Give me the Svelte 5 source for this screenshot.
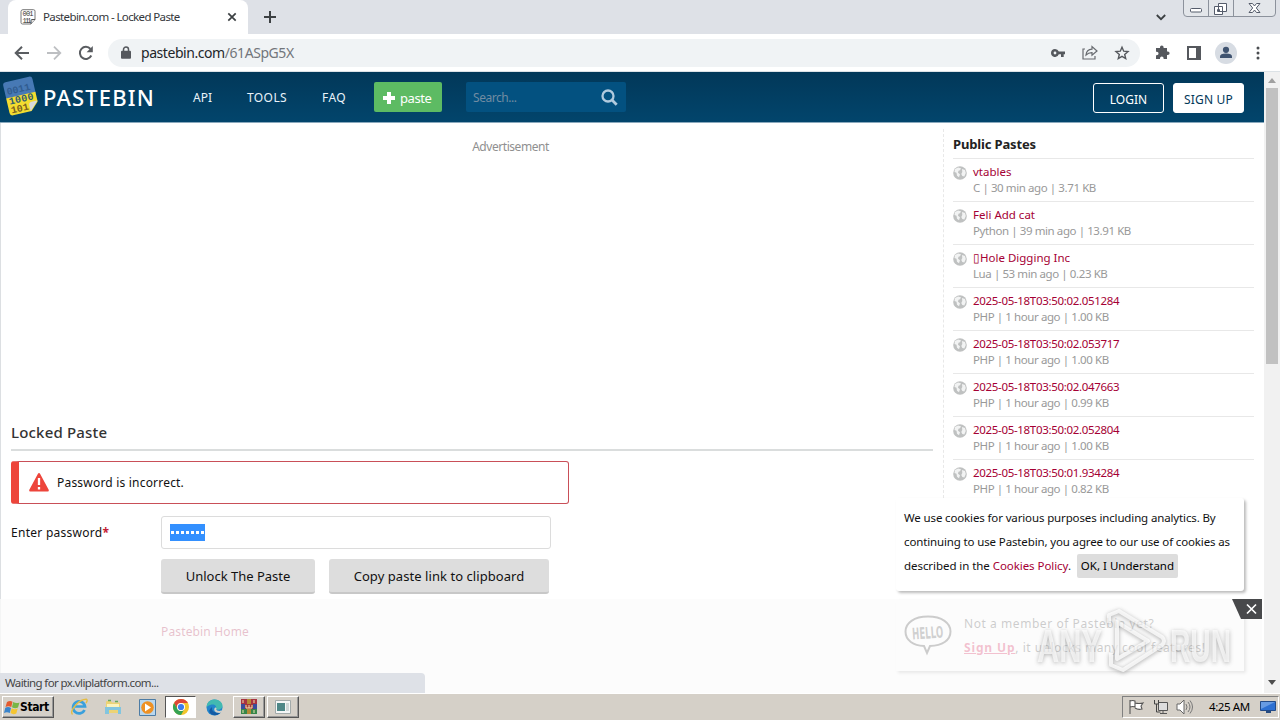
<script lang="ts">
	type Paste = { title: string; meta: string };

	const pastes: Paste[] = [
		{ title: 'vtables', meta: 'C | 30 min ago | 3.71 KB' },
		{ title: 'Feli Add cat', meta: 'Python | 39 min ago | 13.91 KB' },
		{ title: '▯Hole Digging Inc', meta: 'Lua | 53 min ago | 0.23 KB' },
		{ title: '2025-05-18T03:50:02.051284', meta: 'PHP | 1 hour ago | 1.00 KB' },
		{ title: '2025-05-18T03:50:02.053717', meta: 'PHP | 1 hour ago | 1.00 KB' },
		{ title: '2025-05-18T03:50:02.047663', meta: 'PHP | 1 hour ago | 0.99 KB' },
		{ title: '2025-05-18T03:50:02.052804', meta: 'PHP | 1 hour ago | 1.00 KB' },
		{ title: '2025-05-18T03:50:01.934284', meta: 'PHP | 1 hour ago | 0.82 KB' }
	];
</script>

<div class="screen">
	<div class="tabs">
		<div class="tab">
			<svg class="favicon" width="16" height="16" viewBox="0 0 16 16">
				<path d="M3 .7h10.500q1.500 0 1.500 1.500v8.300L11 15H2.500Q1 15 1 13.500V2.500Q1 .7 3 .7z" fill="#fff" stroke="#777" />
				<path d="M15 10.500h-3q-1 0-1 1V15" fill="#ddd" stroke="#555" />
				<text x="2.500" y="7.300" textLength="11">001</text>
				<text x="2.500" y="13.500" textLength="9">111</text>
			</svg>
			<span class="tab-title">Pastebin.com - Locked Paste</span>
			<svg class="tab-close" width="10" height="10" viewBox="0 0 10 10"><path d="M1.300 1.300l7.400 7.400M8.700 1.300L1.300 8.700" stroke="#3c4043" stroke-width="1.700" /></svg>
		</div>
		<svg class="new-tab" width="12" height="12" viewBox="0 0 12 12"><path d="M6 0v12M0 6h12" stroke="#3c4043" stroke-width="2" /></svg>
		<svg class="tab-search" width="10" height="7" viewBox="0 0 10 7"><path d="M.8 1L5 5.200 9.200 1" fill="none" stroke="#3c4043" stroke-width="1.800" /></svg>
		<svg class="window-buttons" width="94" height="18" viewBox="0 0 94 18">
			<path d="M.5-1v14q0 3.500 3.500 3.500h85q3.500 0 3.500-3.500V-1M25.500 0v16M50.500 0v16" fill="#e3e6ea" stroke="#8c929c" />
			<rect x="7.500" y="8.500" width="11" height="3.500" rx="1" fill="#fff" stroke="#555c6b" />
			<path d="M35.500 3.500h8v8h-8zM31.500 6.500h8v8h-8z" fill="#fff" stroke="#555c6b" />
			<path d="M34.500 9.500h2v2h-2z" fill="none" stroke="#555c6b" />
			<path d="M66 3.500h3.500l2 2.500 2-2.500H77L73.300 8l3.700 4.500h-3.500l-2-2.500-2 2.500H66L69.700 8z" fill="#fff" stroke="#555c6b" />
		</svg>
	</div>

	<div class="toolbar">
		<svg class="nav-icon" width="16" height="16" viewBox="0 0 16 16"><path d="M15 8H2M8 1.700L1.700 8 8 14.300" fill="none" stroke="#5a5d61" stroke-width="2" /></svg>
		<svg class="nav-icon" width="16" height="16" viewBox="0 0 16 16"><path d="M1 8h13M8 1.700L14.300 8 8 14.300" fill="none" stroke="#bdbfc2" stroke-width="1.800" /></svg>
		<svg class="nav-icon" width="16" height="16" viewBox="0 0 16 16"><path d="M13.300 10.500A6 6 0 1 1 12.500 4" fill="none" stroke="#5a5d61" stroke-width="2" /><path d="M14.800 1v6.200H8.600z" fill="#5a5d61" /></svg>
		<div class="omnibox">
			<svg width="10" height="13" viewBox="0 0 10 13"><path d="M2.500 6V3.500a2.500 2.500 0 0 1 5 0V6" fill="none" stroke="#55585d" stroke-width="1.500" /><rect y="4.800" width="10" height="8" rx="1" fill="#55585d" /></svg>
			<span class="url">pastebin.com<span>/61ASpG5X</span></span>
			<div class="omni-icons">
				<svg width="14" height="8" viewBox="0 0 14 8"><path fill-rule="evenodd" d="M4 0a4 4 0 0 1 3.800 2.600H14v2.700h-1.300V8H10V5.300H7.800A4 4 0 1 1 4 0zM4 2.600a1.400 1.400 0 1 0 0 2.800 1.400 1.400 0 0 0 0-2.800z" fill="#55585d" /></svg>
				<svg width="16" height="15" viewBox="0 0 16 15"><path d="M3 4H1v10h12v-3M4 10q.5-5.500 6-5.800V1.500L15 6l-5 4.300V7.600Q6.500 7.500 4 10z" fill="none" stroke="#686b70" stroke-width="1.200" /></svg>
				<svg width="14" height="14" viewBox="0 0 14 14"><path d="M7 1.200l1.700 4 4.300.4-3.300 2.800 1 4.200L7 10.400l-3.700 2.200 1-4.200L1 5.600l4.300-.4z" fill="none" stroke="#55585d" stroke-width="1.400" /></svg>
			</div>
		</div>
		<div class="actions">
			<svg width="15" height="15" viewBox="0 0 15 15"><path d="M5 2.300a1.800 1.800 0 0 1 3.600 0V3H12v3.500h.8a1.800 1.800 0 0 1 0 3.600H12V14H8.600v-.8a1.800 1.800 0 0 0-3.600 0v.8H1v-3.700h.8a1.700 1.700 0 0 0 0-3.500H1V3h4z" fill="#55585d" /></svg>
			<svg width="14" height="14" viewBox="0 0 14 14"><path d="M1 1h12v12H1z" fill="none" stroke="#55585d" stroke-width="2" /><path d="M9 1h4v12H9z" fill="#55585d" /></svg>
			<svg width="22" height="22" viewBox="0 0 22 22"><circle cx="11" cy="11" r="11" fill="#d7dce3" /><circle cx="11" cy="7.800" r="3.100" fill="#3f5370" /><path d="M5 16v-1.500q0-3 6-3t6 3V16z" fill="#3f5370" /></svg>
			<svg width="4" height="14" viewBox="0 0 4 14"><circle cx="2" cy="2" r="1.500" fill="#4a4d51" /><circle cx="2" cy="7" r="1.500" fill="#4a4d51" /><circle cx="2" cy="12" r="1.500" fill="#4a4d51" /></svg>
		</div>
	</div>

	<div class="viewport">
		<div class="site">
			<header>
				<svg class="logo" width="38" height="42" viewBox="0 0 38 42">
					<g transform="rotate(-13 19 21)">
						<path d="M7 4h24q3 0 3 3v14H4V7q0-3 3-3z" fill="#4779b5" />
						<path d="M4 20h30v10l-8 8H7q-3 0-3-3z" fill="#f3dc30" />
						<path d="M34 29h-6q-3 0-3 3v6z" fill="#d8dadd" />
						<text x="6" y="17" fill="#315d91" textLength="24">0011</text>
						<text x="6" y="27" fill="#315d70" textLength="25">1000</text>
						<text x="6" y="36" fill="#795f20" textLength="18">101</text>
					</g>
				</svg>
				<span class="brand">PASTEBIN</span>
				<nav>
					<a href="#api" class="api">API</a>
					<a href="#tools" class="tools">TOOLS</a>
					<a href="#faq" class="faq">FAQ</a>
				</nav>
				<button class="new-paste">
					<svg width="14" height="14" viewBox="0 0 14 14"><path d="M5 1h4v4h4v4H9v4H5V9H1V5h4z" fill="#fff" /></svg>
					<span>paste</span>
				</button>
				<div class="search">
					<span>Search...</span>
					<svg width="17" height="17" viewBox="0 0 17 17"><circle cx="7" cy="7" r="5.500" fill="none" stroke="#b1cade" stroke-width="2.300" /><path d="M11 11l4.700 4.700" stroke="#b1cade" stroke-width="2.800" /></svg>
				</div>
				<div class="account">
					<button class="login">LOGIN</button>
					<button class="signup">SIGN UP</button>
				</div>
			</header>

			<div class="columns">
				<main>
					<div class="ad"><span>Advertisement</span></div>
					<h1><span>Locked Paste</span></h1>
					<div class="error">
						<svg width="20" height="19" viewBox="0 0 20 19"><path d="M10 0q.7 0 1.200 1l8.600 16q.4 1.500-1.200 1.500H1.400Q-.2 18.500.2 17L8.800 1Q9.300 0 10 0z" fill="#ed453b" /><path d="M10 5v7M10 14v2.500" stroke="#fff" stroke-width="2.300" /></svg>
						<span>Password is incorrect.</span>
					</div>
					<div class="field">
						<label for="password"><span>Enter password</span><b>*</b></label>
						<div class="input" id="password">
							<div class="selection">{#each Array(7) as _}<i></i>{/each}</div>
						</div>
					</div>
					<div class="buttons">
						<button class="unlock"><span>Unlock The Paste</span></button>
						<button class="copy"><span>Copy paste link to clipboard</span></button>
					</div>
					<a class="home" href="#home">Pastebin Home</a>
				</main>
				<aside>
					<h2>Public Pastes</h2>
					<ul>
						{#each pastes as paste, i}
							<li>
								<svg width="14" height="14" viewBox="0 0 14 14"><circle cx="7" cy="7" r="6.800" fill="#bfc1c1" /><path d="M2 3l3-1.500 3 .8-1 2-1.500.5-.5 2 2 1.500-1 3-2-1.500-.5-3L1.500 6zM9 3l3 1 .8 3-1.500 3.500-2-.5-1-2 1-2z" fill="#f2f3f3" /></svg>
								<div>
									<a href="#paste" class:stamp={i > 2}>{paste.title}</a>
									<p>{paste.meta}</p>
								</div>
							</li>
						{/each}
					</ul>
				</aside>
			</div>

			<div class="cookies">
				<p>We use cookies for various purposes including analytics. By</p>
				<p>continuing to use Pastebin, you agree to our use of cookies as</p>
				<p><span class="policy">described in the <a href="#policy">Cookies Policy</a>.</span><button>OK, I Understand</button></p>
			</div>
			<div class="welcome">
				<svg class="hello" width="48" height="40" viewBox="0 0 48 40">
					<path d="M24 1.500C10 1.500 1.500 8 1.500 16.500c0 9 8 14 18.500 14.500l3 7 3-7c12-.4 20.500-5.500 20.500-14.500C46.500 8 38 1.500 24 1.500z" fill="none" stroke="#333" stroke-width="2" />
					<text x="8" y="23.500" transform="rotate(-4 24 17)" textLength="31" lengthAdjust="spacingAndGlyphs">HELLO</text>
				</svg>
				<div>
					<p class="member">Not a member of Pastebin yet?</p>
					<p class="features"><a href="#signup">Sign Up</a>, it unlocks many cool features!</p>
				</div>
			</div>
			<div class="bottom-ad">
				<svg width="30" height="20" viewBox="0 0 30 20"><path d="M0 0h30v20H9z" fill="#48494b" /><path d="M15 5.500l9 9M24 5.500l-9 9" stroke="#fff" stroke-width="1.700" /></svg>
			</div>
			<svg class="watermark" width="204" height="68" viewBox="0 0 204 68">
				<text x="5" y="54" textLength="65" lengthAdjust="spacingAndGlyphs">ANY</text>
				<path d="M77 15V7l10-4 43 26q4 4 0 8L91 62l-12-5V45M85 14v37l31-18z" fill="none" stroke="#fff" stroke-width="4" stroke-linejoin="round" />
				<text x="138" y="54" textLength="61" lengthAdjust="spacingAndGlyphs">RUN</text>
			</svg>
			<div class="status"><span>Waiting for px.vliplatform.com...</span></div>
		</div>
		<div class="scrollbar">
			<svg width="8" height="5" viewBox="0 0 8 5"><path d="M4 0l4 5H0z" fill="#a0a0a0" /></svg>
			<div class="thumb"></div>
			<svg width="8" height="5" viewBox="0 0 8 5"><path d="M4 5l4-5H0z" fill="#4c4c4c" /></svg>
		</div>
	</div>

	<div class="taskbar">
		<button class="start">
			<svg width="16" height="16" viewBox="0 0 16 16"><path d="M3 3q3-2 5.500-.3L7.300 8Q4.500 6.500 1.500 8z" fill="#e35a2e" /><path d="M9.200 3q3 1.800 6.300.4L14 8.600Q11 10 8 8.300z" fill="#78b646" /><path d="M1.300 8.800q3-1.500 5.700.2l-1.200 5Q3 12.500 0 14z" fill="#3a84cb" /><path d="M7.700 9.200q3 1.800 6 .3l-1.400 5q-3 1.500-5.800-.4z" fill="#f5c531" /></svg>
			<span>Start</span>
		</button>
		<div class="task ie">
			<svg width="18" height="18" viewBox="0 0 18 18"><path d="M14.500 12A6 6 0 1 1 15 8.500H5" fill="none" stroke="#3aa0dc" stroke-width="2.700" /><path d="M2.500 16.500C-1 13 9 1 16.500 1.300q1.500.7-.5 3.700" fill="none" stroke="#e5bd42" stroke-width="1.400" /></svg>
		</div>
		<div class="task">
			<svg width="18" height="18" viewBox="0 0 18 18"><path d="M2 4q0-1 1-1h4l1 1.500h7q1 0 1 1V15H2z" fill="#ecd375" /><path d="M3 6h12v4H3z" fill="#fbf3bd" /><path d="M1 9h16v7h-3v-4H5v4H1z" fill="#82c5df" /><path d="M4 2.500h3M11 3.500h3" stroke="#66a85c" stroke-width="1.500" /></svg>
		</div>
		<div class="task">
			<svg width="17" height="17" viewBox="0 0 17 17"><path d="M.5.500h16v16H.5z" fill="#b9d7ee" stroke="#4d7ca5" /><circle cx="8.500" cy="8.500" r="6.300" fill="#ee9124" /><path d="M6 4.500l6 4-6 4z" fill="#fff" /></svg>
		</div>
		<div class="task pressed">
			<svg width="16" height="16" viewBox="0 0 16 16"><circle cx="8" cy="8" r="8" fill="#f3c52c" /><path d="M1.070 4A8 8 0 0 1 14.930 4H8a4 4 0 0 0-3.460 6z" fill="#dd4638" /><path d="M1.070 4A8 8 0 0 0 8 16l3.460-6a4 4 0 0 1-6.920 0z" fill="#35a354" /><circle cx="8" cy="8" r="4" fill="#fff" /><circle cx="8" cy="8" r="3.100" fill="#3b7ced" /></svg>
		</div>
		<div class="task edge">
			<svg width="17" height="17" viewBox="0 0 17 17"><circle cx="8.500" cy="8.500" r="8" fill="#2385cb" /><path d="M.5 8C1 2.500 5 .3 9 .5c5 .2 8 4 7.500 7-.5 3-4.500 4-7 2.500 2-3-1-5-4-4.500Q2.500 6 .5 8z" fill="#42b9b1" /><path d="M6 8q-1 6 8 6-4 4-9 1-4-3 1-7z" fill="#145ba4" /><path d="M10 9q-2 2 1 3.500 3 1 5-.5" stroke="#d5d0c8" stroke-width="2" fill="none" /></svg>
		</div>
		<div class="task raised">
			<svg width="18" height="16" viewBox="0 0 18 16"><path d="M1 0h16v5H1z" fill="#a83342" /><path d="M1 5h16v5H1z" fill="#394d9c" /><path d="M1 10h16v5H1z" fill="#36864a" /><path d="M7 0h4v15H7z" fill="#b48a35" /><path d="M5 5h8v5H5z" fill="#a53838" /><path d="M6 6v3h6V6M9 6v3M3 1v3M14 1v3M3 11v3M14 11v3" fill="none" stroke="#f0e2ad" /></svg>
		</div>
		<div class="task raised last">
			<svg width="16" height="14" viewBox="0 0 16 14"><path d="M.5.500h15v13H.5z" fill="#f4f6f6" stroke="#a2aaaa" /><path d="M2 3h8v8H2z" fill="#4d8787" /><path d="M11 3h3v8h-3z" fill="#ced7d7" /></svg>
		</div>
		<div class="tray">
			<svg width="17" height="16" viewBox="0 0 17 16"><path d="M2 15V1M2 2q3-1 5 0v6q-2-1-5 0M7 4q4 1 8 0l-2 3 1 3q-4 1-7-1" fill="#fff" stroke="#555" stroke-width="1.100" /></svg>
			<svg width="16" height="16" viewBox="0 0 16 16"><path d="M5.500 3.500h9v8h-9zM7 14.500h7M10 12v2" fill="#ddd" stroke="#555" /><path d="M1.500 1v4h4V1M3.500 5v8h4" fill="none" stroke="#444" /></svg>
			<svg width="17" height="16" viewBox="0 0 17 16"><path d="M1 5h3l4-4v14l-4-4H1z" fill="#fff" stroke="#666" /><path d="M10 5q2 3 0 6M12 3q4 5 0 10M14 1.500q5 6.500 0 13" fill="none" stroke="#777" /></svg>
			<span class="clock">4:25 AM</span>
			<svg width="16" height="12" viewBox="0 0 16 12"><path d="M.5.500h15v9H.5z" fill="#2d70d2" stroke="#234b88" /><path d="M1 1h14L1 8z" fill="#679be3" /><path d="M6 10h5v2H6z" fill="#264b80" /></svg>
		</div>
	</div>
</div>

<style>
	:global(body) {
		margin: 0;
	}

	.screen {
		width: 1280px;
		height: 720px;
		overflow: hidden;
		display: flex;
		flex-direction: column;
		background: #fff;
		font: 12px/16px 'Noto Sans', sans-serif;
		color: #111;
	}

	.screen :global(*) {
		box-sizing: border-box;
	}

	svg {
		display: block;
		flex: none;
		overflow: visible;
	}

	span,
	p,
	a,
	button,
	h1,
	h2 {
		white-space: nowrap;
	}

	p,
	h1,
	h2,
	ul {
		margin: 0;
		padding: 0;
	}

	a {
		color: #a50034;
		text-decoration: none;
	}

	button {
		font: inherit;
		padding: 0;
		border: 0;
	}

	.tabs {
		height: 34px;
		display: flex;
		background: #dee1e7;
		padding-left: 8px;
		flex: none;
	}

	.tab {
		width: 240px;
		height: 34px;
		background: #fff;
		border-radius: 8px 8px 0 0;
		display: flex;
		align-items: center;
		padding: 0 11px 0 12px;
	}

	.favicon text {
		font: 7px 'Liberation Mono', monospace;
		fill: #333;
	}

	.tab-title {
		margin-left: 7px;
		font-size: 11.5px;
		letter-spacing: -0.62px;
		color: #34373b;
	}

	.tab-close {
		margin-left: auto;
	}

	.new-tab {
		margin: 11px 0 0 16px;
	}

	.tab-search {
		margin: 14px 17px 0 auto;
	}

	.window-buttons {
		margin-right: 3px;
	}

	.toolbar {
		height: 38px;
		display: flex;
		align-items: center;
		flex: none;
		padding-left: 14px;
		border-bottom: 1px solid #dce2e6;
	}

	.nav-icon {
		margin-right: 16px;
	}

	.omnibox {
		width: 1032px;
		height: 28px;
		margin-left: -2px;
		border-radius: 14px;
		background: #f0f3f5;
		display: flex;
		align-items: center;
		padding: 0 11px 0 13px;
	}

	.url {
		margin-left: 10px;
		font-size: 14px;
		letter-spacing: -0.44px;
		color: #222529;
	}

	.url span {
		color: #72767b;
	}

	.omni-icons {
		margin-left: auto;
		display: flex;
		align-items: center;
		gap: 17px;
	}

	.actions {
		display: flex;
		align-items: center;
		margin-left: 15px;
		gap: 17px;
	}

	.actions svg:nth-child(3) {
		margin-left: -3px;
	}

	.actions svg:last-child {
		margin-left: 2px;
	}

	.viewport {
		height: 621px;
		display: flex;
		flex: none;
	}

	.site {
		position: relative;
		width: 1264px;
		overflow: hidden;
	}

	header {
		height: 51px;
		display: flex;
		align-items: center;
		background: linear-gradient(#023859, #02456c);
		border-bottom: 1px solid #8aa9bd;
		color: #fff;
		padding-left: 1px;
	}

	.logo {
		margin: -3px -1px 0 1px;
	}

	.logo text {
		font: bold 10px 'Liberation Mono', monospace;
	}

	.brand {
		width: 111px;
		margin-left: 4px;
		font-size: 22px;
		font-weight: 500;
		letter-spacing: 1.15px;
	}

	nav {
		display: flex;
		width: 220px;
		padding-top: 2px;
	}

	nav a {
		color: #e9f3fa;
	}

	.api {
		margin-left: 39px;
	}

	.tools {
		margin-left: 35px;
		letter-spacing: 0.4px;
	}

	.faq {
		margin-left: 35px;
		letter-spacing: 0.4px;
	}

	.new-paste {
		width: 68px;
		height: 30px;
		background: #5dbb63;
		border-radius: 2px;
		color: #fff;
		display: flex;
		align-items: center;
		gap: 4px;
		padding: 1px 0 0 8px;
		font-size: 13px;
		letter-spacing: -0.4px;
	}

	.search {
		width: 160px;
		height: 30px;
		margin-left: 24px;
		border-radius: 2px;
		background: #035180;
		display: flex;
		align-items: center;
		justify-content: space-between;
		padding: 2px 8px 0 7px;
		color: #718ca2;
		letter-spacing: -0.45px;
	}

	.search svg {
		margin-top: -2px;
	}

	.account {
		margin: 1px 20px 0 auto;
		display: flex;
		gap: 9px;
	}

	.account button {
		width: 71px;
		height: 30px;
		padding-top: 4px;
		border: 1px solid #fff;
		border-radius: 3px;
		background: transparent;
		color: #fff;
	}

	.account .signup {
		background: #fff;
		color: #023859;
		letter-spacing: 0.2px;
	}

	.columns {
		display: flex;
		height: 570px;
		border-left: 1px solid #dcdfe2;
	}

	main {
		width: 922px;
		margin-left: 10px;
	}

	.ad {
		height: 290px;
		padding-top: 16px;
		text-align: center;
		color: #909090;
		margin-left: 77px;
		letter-spacing: -0.45px;
	}

	h1 {
		height: 38px;
		border-bottom: 2px solid #dadddd;
		font-size: 15px;
		font-weight: 500;
		line-height: 39px;
		letter-spacing: 0.18px;
		color: #333;
	}

	.error {
		width: 558px;
		height: 43px;
		margin-top: 10px;
		border: 1px solid #c94f58;
		border-left: 8px solid #ed453b;
		border-radius: 3px;
		display: flex;
		align-items: center;
		padding-left: 10px;
		gap: 8px;
		letter-spacing: 0.2px;
	}

	.field {
		display: flex;
		margin-top: 12px;
		height: 33px;
		line-height: 33px;
	}

	label {
		width: 150px;
		letter-spacing: 0.27px;
	}

	label b {
		color: #c41b33;
	}

	.input {
		width: 390px;
		border: 1px solid #dcdcdc;
		border-radius: 3px;
		padding: 7px 8px;
	}

	.selection {
		width: 35px;
		height: 17px;
		background: #3390ff;
		display: flex;
		align-items: center;
		justify-content: center;
		gap: 2px;
	}

	.selection i {
		width: 3px;
		height: 3px;
		background: #fff;
	}

	.buttons {
		display: flex;
		gap: 14px;
		margin: 10px 0 0 150px;
	}

	.buttons button {
		height: 35px;
		background: #ddd;
		border-bottom: 2px solid #c8c8c8;
		border-radius: 3px;
		color: #111;
		font-size: 13px;
	}

	.unlock {
		width: 154px;
	}

	.copy {
		width: 220px;
		letter-spacing: 0.06px;
	}

	.home {
		display: block;
		margin: 30px 0 0 150px;
		letter-spacing: 0.15px;
	}

	aside {
		width: 311px;
		height: 369px;
		margin: 6px 0 0 10px;
		padding-left: 9px;
		border-left: 1px dashed #e8e8e8;
	}

	h2 {
		height: 29px;
		font-size: 13px;
		line-height: 30px;
		letter-spacing: -0.15px;
		color: #222;
	}

	ul {
		list-style: none;
	}

	li {
		height: 43px;
		border-top: 1px solid #e8e8e8;
		display: flex;
		gap: 6px;
		padding-top: 5px;
	}

	li svg {
		margin-top: 2px;
	}

	li a,
	li p {
		display: block;
		font-size: 11.5px;
		line-height: 16px;
	}

	li .stamp {
		letter-spacing: -0.32px;
	}

	li p {
		color: #999;
		letter-spacing: -0.41px;
	}

	.cookies {
		position: absolute;
		left: 896px;
		top: 426px;
		width: 348px;
		height: 93px;
		padding: 8px;
		background: #fff;
		box-shadow: 2px 2px 3px #bbb;
		border-radius: 3px;
	}

	.cookies p {
		height: 24px;
		line-height: 24px;
		font-size: 11.5px;
		letter-spacing: -0.135px;
	}

	.cookies .policy {
		letter-spacing: -0.06px;
	}

	.cookies button {
		width: 101px;
		height: 24px;
		margin-left: 6px;
		border-radius: 2px;
		background: #ddd;
	}

	.welcome {
		position: absolute;
		left: 896px;
		top: 528px;
		width: 348px;
		height: 71px;
		display: flex;
		padding: 14px 8px;
		gap: 12px;
		background: #fff;
		box-shadow: 2px 2px 3px #aaa;
	}

	.welcome p {
		line-height: 24px;
		margin-top: -2px;
		margin-bottom: 2px;
		color: #333;
	}

	.member {
		letter-spacing: 0.56px;
	}

	.features {
		letter-spacing: 0.5px;
	}

	.welcome a {
		font-weight: bold;
		text-decoration: underline;
		letter-spacing: 0.85px;
		color: #d4003f;
	}

	.hello {
		margin-top: 1px;
	}

	.hello text {
		font: bold 16px 'DejaVu Sans Condensed', sans-serif;
		fill: #444;
	}

	.bottom-ad {
		position: absolute;
		left: 0;
		top: 527px;
		width: 1262px;
		height: 94px;
		background: rgba(251, 251, 251, 0.77);
		display: flex;
		justify-content: flex-end;
	}

	.watermark {
		position: absolute;
		left: 1032px;
		top: 536px;
		opacity: 0.75;
		filter: drop-shadow(0 1px 2px #777);
	}

	.watermark path {
		stroke-opacity: 0.8;
	}

	.watermark text {
		font: bold 46px 'Liberation Sans', sans-serif;
		fill: #fff;
		fill-opacity: 0.7;
	}

	.status {
		position: absolute;
		left: 0;
		top: 601px;
		width: 425px;
		height: 20px;
		padding: 2px 5px;
		background: #dee1e7;
		border-radius: 0 4px 0 0;
		color: #444;
		font-size: 11.5px;
		letter-spacing: -0.6px;
	}

	.scrollbar {
		width: 16px;
		background: #f1f1f1;
		display: flex;
		flex-direction: column;
		align-items: center;
		padding: 6px 0 8px;
	}

	.thumb {
		width: 12px;
		height: 276px;
		margin: 5px 0 auto;
		background: #c1c1c1;
	}

	.taskbar {
		height: 27px;
		background: #d5d0c8;
		border-top: 1px solid #fff;
		display: flex;
		align-items: center;
		padding-left: 2px;
	}

	.start,
	.raised {
		border: 1px solid;
		border-color: #fff #555 #555 #fff;
		box-shadow: inset -1px -1px #999;
		background: #d5d0c8;
	}

	.start {
		width: 52px;
		height: 22px;
		display: flex;
		align-items: center;
		padding-left: 1px;
		font: bold 12px 'DejaVu Sans Condensed', sans-serif;
		letter-spacing: -0.4px;
		color: #000;
	}

	.task {
		width: 34px;
		height: 22px;
		display: flex;
		align-items: center;
		justify-content: center;
	}

	.ie {
		margin-left: 8px;
	}

	.pressed {
		width: 31px;
		margin-left: 1px;
		background: #fff;
		border: 1px solid;
		border-color: #555 #fff #fff #555;
	}

	.edge {
		width: 36px;
	}

	.raised {
		width: 32px;
		margin-left: 1px;
	}

	.last {
		margin-left: 2px;
	}

	.tray {
		width: 157px;
		height: 22px;
		margin: 0 1px 0 auto;
		display: flex;
		align-items: center;
		border: 1px solid;
		border-color: #808080 #fff #fff #808080;
		padding-left: 5px;
		gap: 8px;
	}

	.tray svg:nth-child(3) {
		margin-left: -1px;
	}

	.clock {
		margin-left: 8px;
		width: 43px;
		font-size: 11.5px;
		letter-spacing: -0.4px;
		color: #000;
	}
</style>
